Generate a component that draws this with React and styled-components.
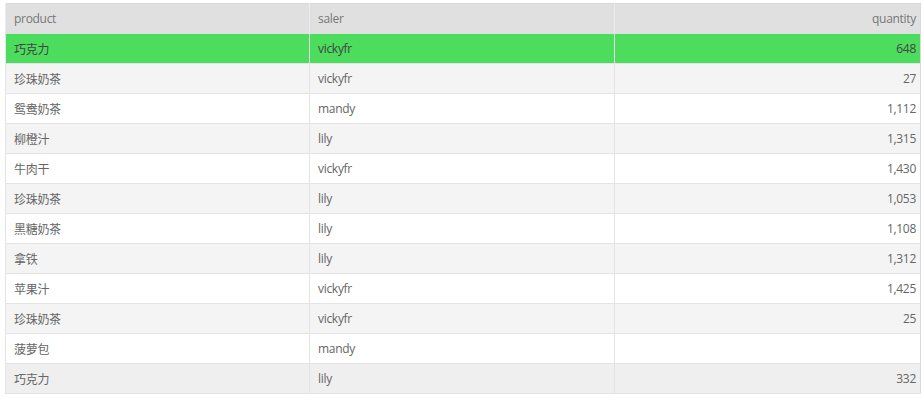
import React from "react";
import styled, { createGlobalStyle } from "styled-components";

const Global = createGlobalStyle`
  html, body { margin: 0; padding: 0; background: #fff; }
  body { font-family: "Open Sans", "Noto Sans CJK SC", sans-serif; }
`;

const Wrap = styled.div`
  padding: 3px 3px 0 5px;
`;

const Table = styled.table`
  width: 915px;
  border-collapse: collapse;
  table-layout: fixed;
  border: 1px solid #d9d9d9;
  font-size: 12px;
  letter-spacing: -0.3px;
  color: #666;
`;

const HeadCell = styled.th`
  height: 29px;
  padding: 0 4px 0 8px;
  background: #e0e0e0;
  font-weight: normal;
  color: #777;
  text-align: ${(p) => (p.$right ? "right" : "left")};
  border-left: 1px solid #ececec;
  border-bottom: 1px solid #e0e0e0;
  white-space: nowrap;
`;

const Row = styled.tr`
  background: ${(p) => p.$bg};
`;

const Cell = styled.td`
  height: 29px;
  padding: 0 4px 0 8px;
  text-align: ${(p) => (p.$right ? "right" : "left")};
  border-left: 1px solid #e4e4e4;
  border-bottom: 1px solid #e4e4e4;
  color: ${(p) => (p.$strong ? "#444" : "#666")};
  white-space: nowrap;
`;

const rows = [
  ["巧克力", "vickyfr", "648"],
  ["珍珠奶茶", "vickyfr", "27"],
  ["鸳鸯奶茶", "mandy", "1,112"],
  ["柳橙汁", "lily", "1,315"],
  ["牛肉干", "vickyfr", "1,430"],
  ["珍珠奶茶", "lily", "1,053"],
  ["黑糖奶茶", "lily", "1,108"],
  ["拿铁", "lily", "1,312"],
  ["苹果汁", "vickyfr", "1,425"],
  ["珍珠奶茶", "vickyfr", "25"],
  ["菠萝包", "mandy", ""],
  ["巧克力", "lily", "332"],
];

function rowBg(i) {
  if (i === 0) return "#4cdc5e";
  if (i === rows.length - 1) return "#efefef";
  return i % 2 === 1 ? "#f4f4f4" : "#ffffff";
}

export default function App() {
  return (
    <Wrap>
      <Global />
      <Table>
        <colgroup>
          <col style={{ width: 304 }} />
          <col style={{ width: 305 }} />
          <col style={{ width: 306 }} />
        </colgroup>
        <thead>
          <tr>
            <HeadCell>product</HeadCell>
            <HeadCell>saler</HeadCell>
            <HeadCell $right>quantity</HeadCell>
          </tr>
        </thead>
        <tbody>
          {rows.map((r, i) => (
            <Row key={i} $bg={rowBg(i)}>
              <Cell $strong={i === 0}>{r[0]}</Cell>
              <Cell $strong={i === 0}>{r[1]}</Cell>
              <Cell $right $strong={i === 0}>{r[2]}</Cell>
            </Row>
          ))}
        </tbody>
      </Table>
    </Wrap>
  );
}
